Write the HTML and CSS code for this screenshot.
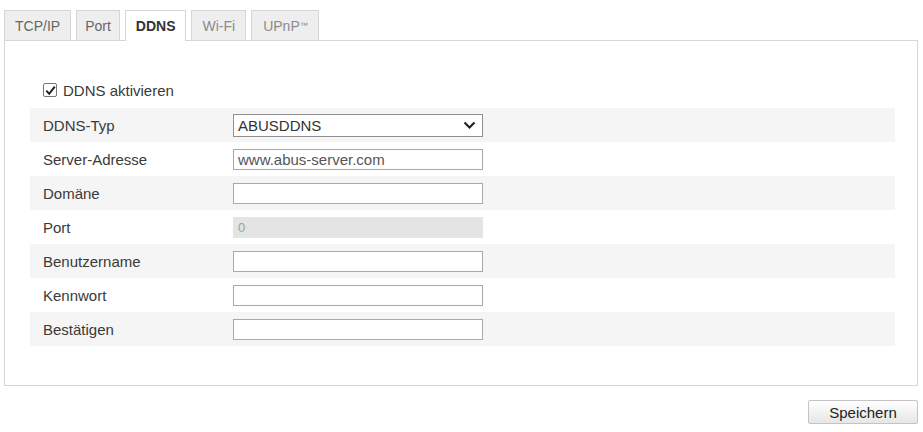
FILE: index.html
```
<!DOCTYPE html>
<html lang="de">

<head>
    <meta charset="UTF-8">
    <meta name="viewport" content="width=device-width, initial-scale=1.0">
    <title>DDNS</title>
    <link rel="stylesheet" href="styles.css">
</head>

<body>
    <!-- Reiter der Netzwerkeinstellungen -->
    <ul class="tabs">
        <li class="tab">TCP/IP</li>
        <li class="tab tab-port">Port</li>
        <li class="tab active">DDNS</li>
        <li class="tab dim">Wi-Fi</li>
        <li class="tab dim tab-upnp">UPnP<sup>™</sup></li>
    </ul>

    <div class="panel">
        <label class="enable">
            <span class="check">
                <svg width="11" height="11" viewBox="0 0 11 11">
                    <path d="M1.3 5.6 L4.2 8.8 L9.8 1.6" fill="none" stroke="#222" stroke-width="2" />
                </svg>
            </span>
            DDNS aktivieren
        </label>

        <div class="rows">
            <div class="row">
                <span class="label">DDNS-Typ</span>
                <div class="select">
                    <span>ABUSDDNS</span>
                    <svg width="13" height="9" viewBox="0 0 13 9">
                        <path d="M1.5 1.5 L6.5 6.5 L11.5 1.5" fill="none" stroke="#222" stroke-width="2.2" />
                    </svg>
                </div>
            </div>
            <div class="row">
                <span class="label">Server-Adresse</span>
                <div class="field">www.abus-server.com</div>
            </div>
            <div class="row">
                <span class="label">Domäne</span>
                <div class="field"></div>
            </div>
            <div class="row">
                <span class="label">Port</span>
                <div class="field disabled">0</div>
            </div>
            <div class="row">
                <span class="label">Benutzername</span>
                <div class="field"></div>
            </div>
            <div class="row">
                <span class="label">Kennwort</span>
                <div class="field"></div>
            </div>
            <div class="row">
                <span class="label">Bestätigen</span>
                <div class="field"></div>
            </div>
        </div>
    </div>

    <div class="actions">
        <button type="button" class="button">Speichern</button>
    </div>
</body>

</html>
```
FILE: styles.css
```
body {
    margin: 0;
    padding: 10px 5px 0 4px;
    background-color: #ffffff;
    color: #3a3a3a;
    font-family: "Liberation Sans", Arial, sans-serif;
    font-size: 15px;
}

/* Reiter */
.tabs {
    display: flex;
    gap: 5px;
    list-style: none;
    margin: 0;
    padding: 0;
    height: 30px;
}

.tab {
    box-sizing: border-box;
    height: 30px;
    padding: 0 10px;
    display: flex;
    align-items: center;
    background-color: #eeeeee;
    border: 1px solid #d6d6d6;
    border-bottom: none;
    color: #666666;
    font-size: 14px;
}

.tab-port {
    padding: 0 8px;
}

.tab.dim {
    color: #8a8a8a;
}

.tab-upnp {
    padding: 0 10px 0 11px;
}

.tab-upnp sup {
    font-size: 8px;
    vertical-align: 4px;
}

.tab.active {
    background-color: #ffffff;
    color: #333333;
    font-weight: bold;
    height: 31px;
    position: relative;
    z-index: 1;
}

/* Inhalt */
.panel {
    box-sizing: border-box;
    width: 914px;
    height: 346px;
    border: 1px solid #d6d6d6;
    padding: 42px 22px 0 25px;
}

.enable {
    display: flex;
    align-items: center;
    gap: 6px;
    margin-left: 13px;
    height: 14px;
}

.check {
    box-sizing: border-box;
    width: 14px;
    height: 14px;
    border: 1px solid #777777;
    border-radius: 2px;
    display: flex;
    align-items: center;
    justify-content: center;
}

.rows {
    margin-top: 11px;
}

.row {
    height: 34px;
    display: flex;
    align-items: center;
    padding-left: 13px;
}

.row:nth-child(odd) {
    background-color: #f5f5f5;
}

.label {
    width: 190px;
}

.field,
.select {
    box-sizing: border-box;
    width: 250px;
    height: 21px;
    border: 1px solid #a9a9a9;
    background-color: #ffffff;
    padding: 0 4px;
    display: flex;
    align-items: center;
    color: #555555;
}

.select {
    height: 23px;
    border-color: #8f8f8f;
    justify-content: space-between;
    padding-right: 6px;
    color: #333333;
}

.field.disabled {
    background-color: #e4e4e4;
    border-color: #e4e4e4;
    color: #a0a0a0;
    font-size: 13px;
}

.actions {
    display: flex;
    justify-content: flex-end;
    margin-top: 14px;
}

.button {
    width: 110px;
    height: 24px;
    border: 1px solid #c4c4c4;
    border-radius: 2px;
    background: linear-gradient(#ffffff, #e6e6e6);
    color: #222222;
    font-family: "Liberation Sans", Arial, sans-serif;
    font-size: 15px;
    padding: 0;
}
```
